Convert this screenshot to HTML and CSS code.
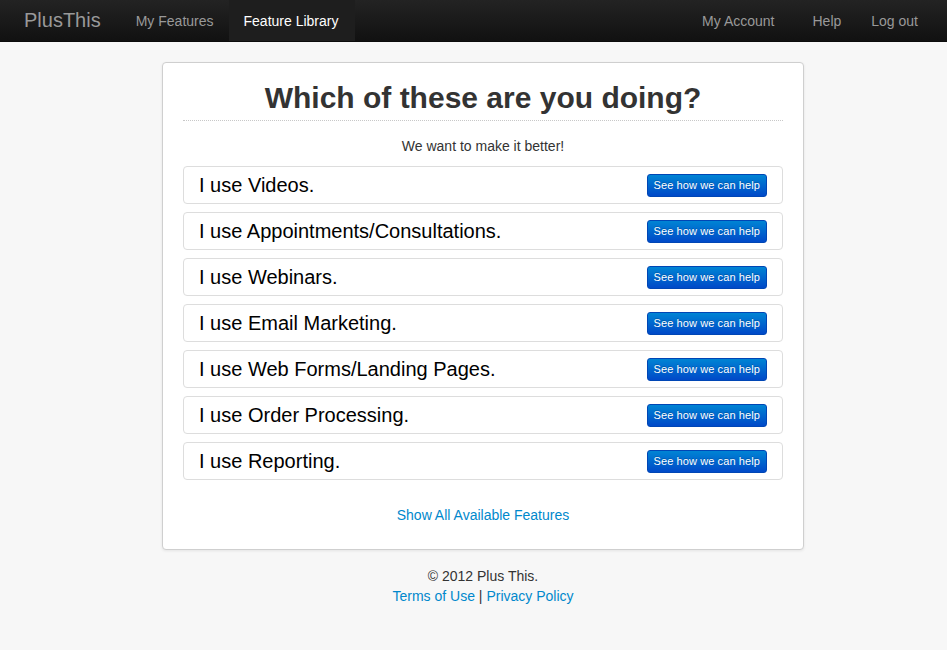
FILE: index.html
```html
<!DOCTYPE html>
<html>
<head>
<meta charset="utf-8">
<title>PlusThis</title>
<link rel="stylesheet" href="styles.css">
</head>
<body>
<header class="navbar">
  <a class="brand" href="#">PlusThis</a>
  <nav class="nav">
    <a class="nav-link" href="#">My Features</a>
    <a class="nav-link active" href="#">Feature Library</a>
  </nav>
  <nav class="nav nav-right">
    <a class="nav-link" href="#">My Account</a>
    <a class="nav-link help" href="#">Help</a>
    <a class="nav-link" href="#">Log out</a>
  </nav>
</header>

<main class="main">
  <section class="card">
    <h1 class="title">Which of these are you doing?</h1>
    <p class="subtitle">We want to make it better!</p>
    <ul class="uses">
      <li class="use"><span class="use-text">I use Videos.</span><a class="btn" href="#">See how we can help</a></li>
      <li class="use"><span class="use-text">I use Appointments/Consultations.</span><a class="btn" href="#">See how we can help</a></li>
      <li class="use"><span class="use-text">I use Webinars.</span><a class="btn" href="#">See how we can help</a></li>
      <li class="use"><span class="use-text">I use Email Marketing.</span><a class="btn" href="#">See how we can help</a></li>
      <li class="use"><span class="use-text">I use Web Forms/Landing Pages.</span><a class="btn" href="#">See how we can help</a></li>
      <li class="use"><span class="use-text">I use Order Processing.</span><a class="btn" href="#">See how we can help</a></li>
      <li class="use"><span class="use-text">I use Reporting.</span><a class="btn" href="#">See how we can help</a></li>
    </ul>
    <a class="show-all" href="#">Show All Available Features</a>
  </section>
  <footer class="footer">
    <div>© 2012 Plus This.</div>
    <div><a href="#">Terms of Use</a> | <a href="#">Privacy Policy</a></div>
  </footer>
</main>
</body>
</html>
```

FILE: styles.css
```css
* { box-sizing: border-box; }
html, body { margin: 0; padding: 0; }
body {
  background: #f7f7f7;
  font-family: "Liberation Sans", Arial, sans-serif;
  font-size: 14px;
  line-height: 20px;
  color: #333;
}
a { text-decoration: none; color: #0088cc; }

.navbar {
  display: flex;
  align-items: stretch;
  height: 42px;
  background: linear-gradient(#232323, #111111);
  border-bottom: 1px solid #0c0c0c;
}
.brand {
  padding: 10px 20px 0 24px;
  font-size: 20px;
  line-height: 21px;
  color: #999;
}
.nav { display: flex; }
.nav-right { margin-left: auto; margin-right: 14px; }
.nav-link {
  padding: 11px 15px 10px;
  color: #999;
  line-height: 20px;
}
.nav-link.active {
  color: #fff;
  background: #1e1e1e;
  padding: 11px 17px 10px 15px;
}
.nav-link.help { margin-left: 8px; }

.main {
  width: 642px;
  margin: 20px 0 0 162px;
}
.card {
  display: flex;
  flex-direction: column;
  background: #fff;
  border: 1px solid #cfcfcf;
  border-radius: 4px;
  box-shadow: 0 1px 3px rgba(0,0,0,0.08);
  padding: 20px 20px 24px;
}
.title {
  margin: 0;
  font-size: 30px;
  line-height: 30px;
  font-weight: bold;
  text-align: center;
  color: #333;
  padding-bottom: 7px;
  border-bottom: 1px dotted #c8c8c8;
}
.subtitle {
  margin: 15px 0 10px;
  text-align: center;
}
.uses {
  list-style: none;
  margin: 0;
  padding: 0;
  display: flex;
  flex-direction: column;
  gap: 8px;
}
.use {
  display: flex;
  align-items: center;
  justify-content: space-between;
  height: 38px;
  padding: 0 15px 0 15px;
  border: 1px solid #ddd;
  border-radius: 4px;
}
.use-text {
  font-size: 20px;
  color: #000;
}
.btn {
  display: block;
  padding: 2px 6px 3px;
  font-size: 11px;
  line-height: 16px;
  color: #fff;
  background: linear-gradient(#0084d4, #0049c8);
  border: 1px solid #0046b5;
  border-radius: 3px;
  text-shadow: 0 -1px 0 rgba(0,0,0,0.2);
  letter-spacing: 0.1px;
}
.show-all {
  margin-top: 25px;
  align-self: center;
}
.footer {
  margin-top: 16px;
  text-align: center;
}
```
